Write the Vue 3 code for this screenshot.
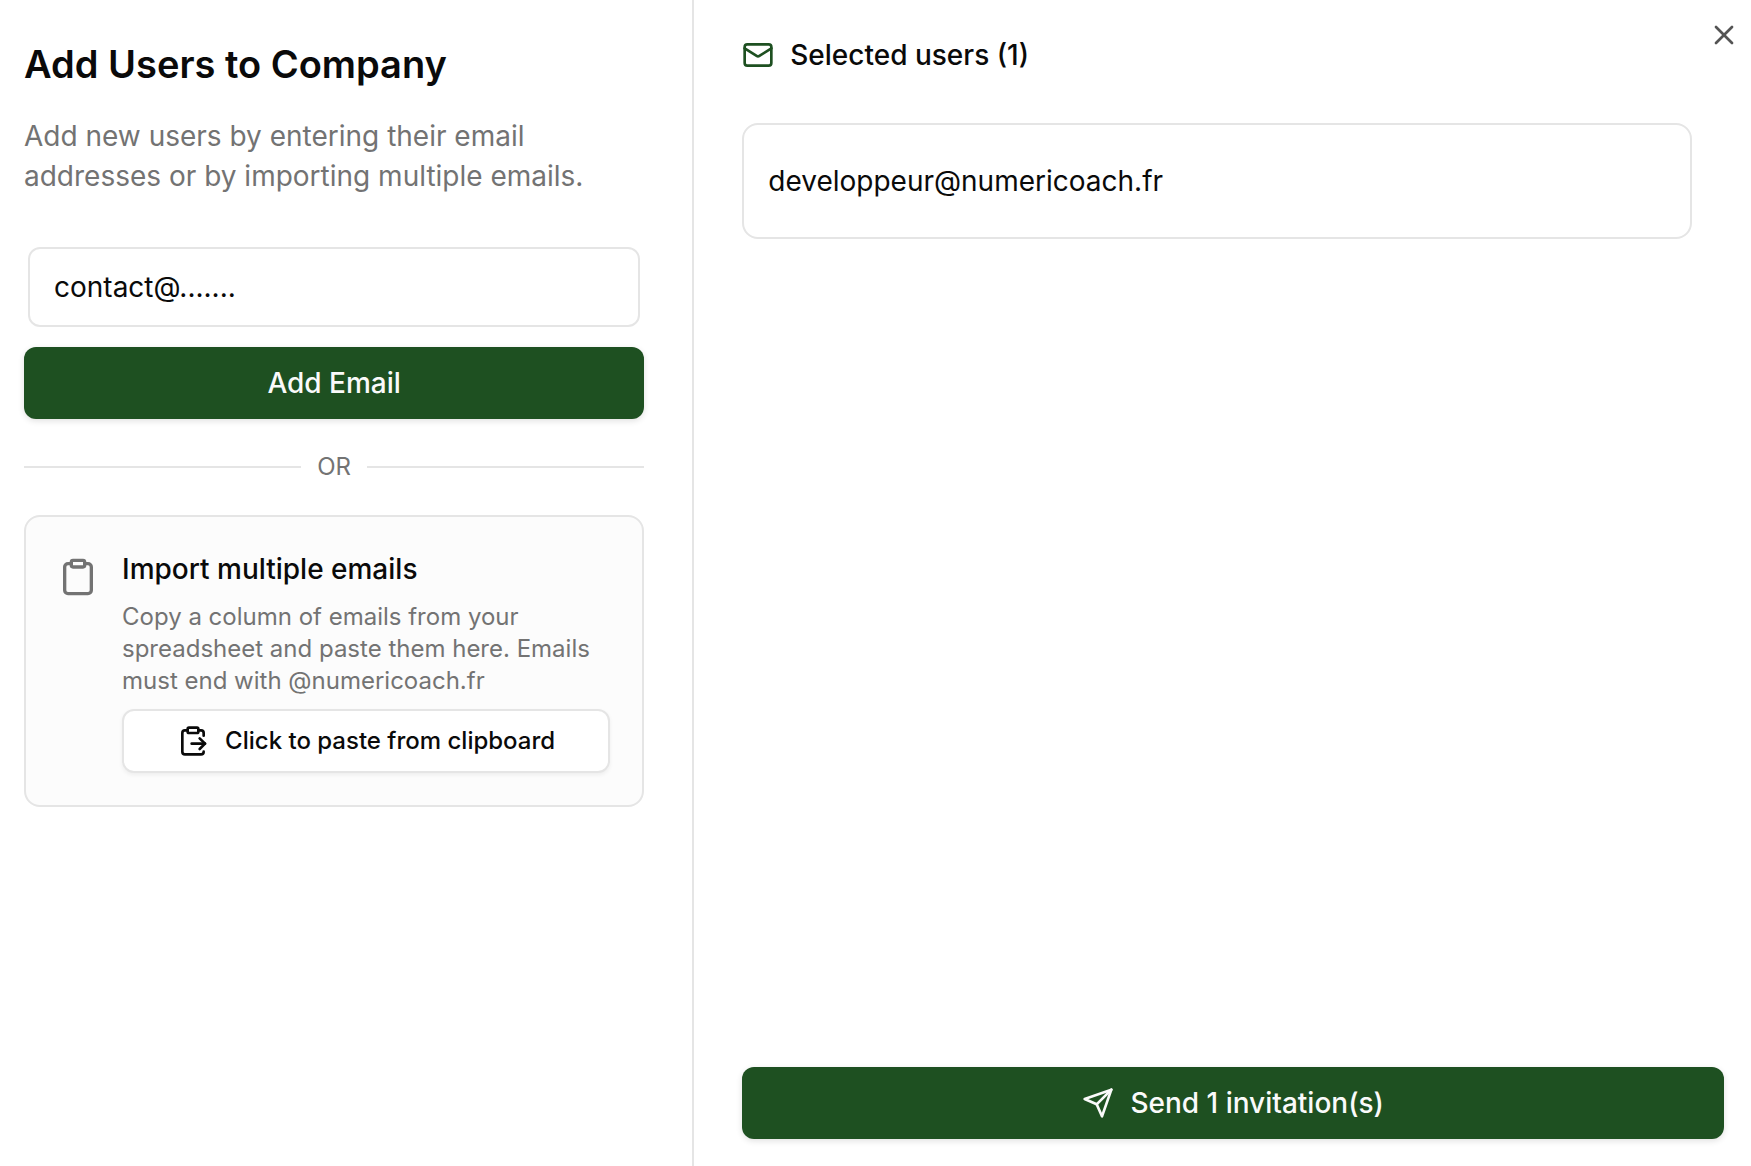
<script setup>
import { ref } from 'vue'

const email = ref('contact@.......')
const selected = ref(['developpeur@numericoach.fr'])
</script>

<template>
  <main class="dialog">
    <section class="entry">
      <h1>Add Users to Company</h1>
      <p class="lead">Add new users by entering their email addresses or by importing multiple emails.</p>

      <form class="add-form" @submit.prevent>
        <input v-model="email" class="email-input" type="text" aria-label="Email address" />
        <button class="btn primary" type="submit">Add Email</button>
      </form>

      <div class="separator"><span>OR</span></div>

      <div class="import-card">
        <svg class="icon clipboard" viewBox="0 0 24 24" aria-hidden="true">
          <rect x="8" y="2" width="8" height="4" rx="1" />
          <path d="M16 4h2a2 2 0 0 1 2 2v14a2 2 0 0 1-2 2H6a2 2 0 0 1-2-2V6a2 2 0 0 1 2-2h2" />
        </svg>
        <div class="import-body">
          <h2>Import multiple emails</h2>
          <p>Copy a column of emails from your spreadsheet and paste them here. Emails must end with @numericoach.fr</p>
          <button class="btn outline" type="button">
            <svg class="icon" viewBox="0 0 24 24" aria-hidden="true">
              <rect x="8" y="2" width="8" height="4" rx="1" />
              <path d="M8 4H6a2 2 0 0 0-2 2v14a2 2 0 0 0 2 2h12a2 2 0 0 0 2-2" />
              <path d="M16 4h2a2 2 0 0 1 2 2v2" />
              <path d="M11 14h10" />
              <path d="m17 10 4 4-4 4" />
            </svg>
            Click to paste from clipboard
          </button>
        </div>
      </div>
    </section>

    <section class="selection">
      <header class="selection-head">
        <svg class="icon mail" viewBox="0 0 24 24" aria-hidden="true">
          <rect x="2" y="4" width="20" height="16" rx="2" />
          <path d="m22 7-8.97 5.7a1.94 1.94 0 0 1-2.06 0L2 7" />
        </svg>
        <h2>Selected users ({{ selected.length }})</h2>
      </header>

      <ul class="users">
        <li v-for="user in selected" :key="user">{{ user }}</li>
      </ul>

      <button class="btn primary" type="button">
        <svg class="icon" viewBox="0 0 24 24" aria-hidden="true">
          <path d="m22 2-7 20-4-9-9-4Z" />
          <path d="M22 2 11 13" />
        </svg>
        Send {{ selected.length }} invitation(s)
      </button>
    </section>

    <button class="close" type="button" aria-label="Close">
      <svg class="icon" viewBox="0 0 24 24" aria-hidden="true">
        <path d="M18 6 6 18" />
        <path d="m6 6 12 12" />
      </svg>
    </button>
  </main>
</template>

<style>
body {
  margin: 0;
  background: #fff;
}
</style>

<style scoped>
* {
  box-sizing: border-box;
}

.dialog {
  position: relative;
  display: flex;
  min-height: 100vh;
  color: #0a0a0a;
  font-family: Inter, "Liberation Sans", sans-serif;
  font-size: 28px;
  line-height: 40px;
}

h1,
h2,
p,
ul {
  margin: 0;
  padding: 0;
}

h2 {
  font-size: 28px;
  font-weight: 500;
  line-height: 40px;
}

.icon {
  flex: none;
  width: 32px;
  height: 32px;
  fill: none;
  stroke: currentColor;
  stroke-width: 2;
  stroke-linecap: round;
  stroke-linejoin: round;
}

.entry {
  flex: none;
  width: 39.65%;
  padding: 40px 48px 24px 24px;
  border-right: 2px solid #e5e5e5;
}

h1 {
  font-size: 38px;
  font-weight: 600;
  line-height: 48px;
}

.lead {
  margin-top: 28px;
  color: #737373;
}

.add-form {
  display: flex;
  flex-direction: column;
  gap: 20px;
  margin-top: 51px;
}

.email-input {
  height: 80px;
  margin: 0 4px;
  padding: 0 24px;
  border: 2px solid #e5e5e5;
  border-radius: 12px;
  background: #fff;
  color: inherit;
  font: inherit;
}

.btn {
  display: flex;
  align-items: center;
  justify-content: center;
  gap: 16px;
  width: 100%;
  border: 0;
  border-radius: 12px;
  font: inherit;
  font-weight: 500;
}

.primary {
  height: 72px;
  background: #1e5021;
  color: #fafafa;
  box-shadow: 0 2px 6px rgba(0, 0, 0, 0.12);
}

.outline {
  height: 64px;
  margin-top: 12px;
  border: 2px solid #e5e5e5;
  background: #fff;
  color: #0a0a0a;
  font-size: 24px;
  box-shadow: 0 2px 4px rgba(0, 0, 0, 0.06);
}

.separator {
  display: flex;
  align-items: center;
  gap: 16px;
  margin: 32px 0;
  color: #737373;
  font-size: 24px;
  line-height: 32px;
}

.separator::before,
.separator::after {
  flex: 1;
  height: 2px;
  background: #e5e5e5;
  content: "";
}

.import-card {
  display: flex;
  gap: 24px;
  padding: 32px;
  border: 2px solid #e5e5e5;
  border-radius: 16px;
  background: #fcfcfc;
}

.clipboard {
  width: 40px;
  height: 40px;
  margin-top: 8px;
  color: #737373;
}

.import-body {
  flex: 1;
  min-width: 0;
}

.import-body p {
  margin-top: 12px;
  color: #737373;
  font-size: 24px;
  line-height: 32px;
}

.selection {
  display: flex;
  flex: 1;
  flex-direction: column;
  min-width: 0;
  padding: 35px 27px 27px 48px;
}

.selection-head {
  display: flex;
  align-items: center;
  gap: 16px;
}

.mail {
  color: #1e5021;
}

.users {
  flex: 1;
  margin: 48px 32px 48px 0;
  list-style: none;
}

.users li {
  padding: 36px 24px;
  border: 2px solid #e5e5e5;
  border-radius: 16px;
}

.close {
  position: absolute;
  top: 19px;
  right: 11px;
  display: flex;
  padding: 0;
  border: 0;
  background: none;
  color: #545454;
}
</style>
